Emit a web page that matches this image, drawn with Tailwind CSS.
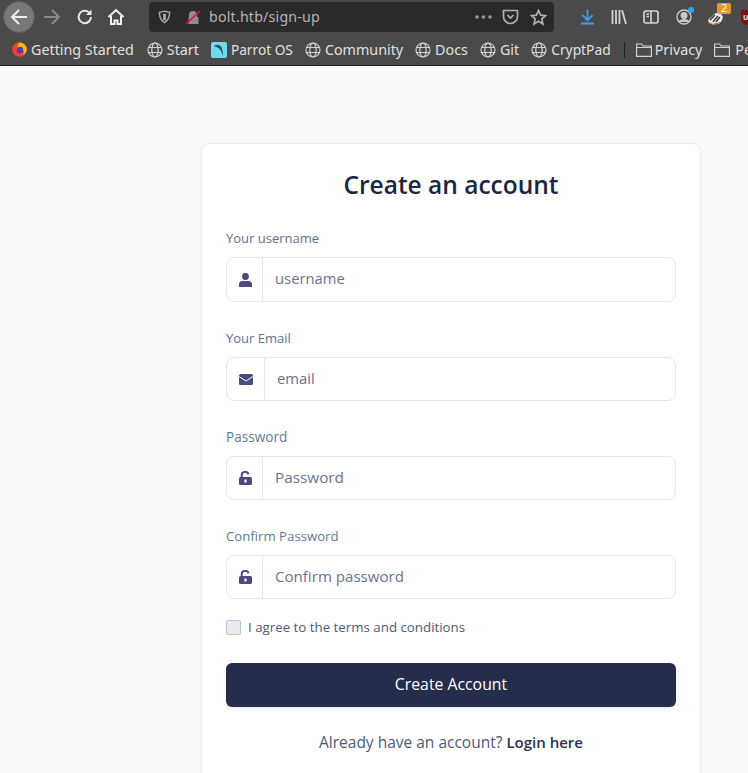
<!doctype html>
<html><head><meta charset="utf-8"><script src="https://cdn.jsdelivr.net/npm/@tailwindcss/browser@4"></script></head>
<body class="h-[773px] w-[748px] overflow-hidden bg-[#fafafa]">
<div class="h-[34px] bg-[#4a4a4a] flex items-center font-['Noto_Sans',sans-serif] text-[#d4d4d4] overflow-hidden">
  <div class="w-8 h-8 ml-[3px] rounded-full bg-[#787878] border border-[#5c5c5c] flex items-center justify-center shrink-0">
    <svg class="w-[18px] h-[18px]" viewBox="0 0 18 18" fill="none" stroke="#eee" stroke-width="2"><path d="M17 9H2M9 2L2 9l7 7"/></svg>
  </div>
  <svg class="w-[18px] h-[18px] ml-[8px] shrink-0" viewBox="0 0 18 18" fill="none" stroke="#8a8a8a" stroke-width="2"><path d="M1 9h15M9 2l7 7-7 7"/></svg>
  <svg class="w-[18px] h-[18px] ml-[15px] shrink-0" viewBox="0 0 18 18" fill="none" stroke="#e8e8e8" stroke-width="2"><path d="M15 9a6.2 6.2 0 1 1-2-4.6L15 6"/><path d="M15.500 1.500V7H10" fill="#e8e8e8" stroke="none"/></svg>
  <svg class="w-[18px] h-[18px] ml-[13px] shrink-0" viewBox="0 0 18 18" fill="none" stroke="#eee" stroke-width="2"><path d="M1.500 9L9 2l7.500 7M4 8v8h3.500v-3.500h3V16H14V8"/></svg>
  <div class="ml-[24px] w-[405px] h-[30px] shrink-0 rounded-[4px] bg-[#2a2a2a] flex items-center">
    <svg class="w-[13px] h-[14px] ml-[9px] shrink-0" viewBox="0 0 14 15" fill="none" stroke="#a8a8a8" stroke-width="1.600"><path d="M1.500 2.500L7 1.200l5.500 1.300c0 5-1 8.800-5.500 11-4.500-2.200-5.500-6-5.500-11z"/><path d="M7 4v7" stroke-width="3"/></svg>
    <svg class="w-[15px] h-[15px] ml-[15px] shrink-0" viewBox="0 0 15 15"><path d="M3 7V5a4 4 0 0 1 8 0v2h1.500v7h-10V7z" fill="#8f8f8f"/><path d="M0 14L14 1" stroke="#e0143c" stroke-width="1.700"/></svg>
    <span class="ml-[8px] text-[14.200px] text-[#b5b5b5] tracking-[0.2px]">bolt.htb/sign-up</span>
    <svg class="w-[17px] h-[4px] ml-[155px] shrink-0" viewBox="0 0 17 4" fill="#9a9a9a"><circle cx="2" cy="2" r="1.800"/><circle cx="8.500" cy="2" r="1.800"/><circle cx="15" cy="2" r="1.800"/></svg>
    <svg class="w-[17px] h-[16px] ml-[10px] shrink-0" viewBox="0 0 17 16" fill="none" stroke="#b0b0b0" stroke-width="1.700"><path d="M1.500 1.500h14v6a7 7 0 0 1-14 0z"/><path d="M5.500 6l3 3 3-3"/></svg>
    <svg class="w-[17px] h-[17px] ml-[11px] shrink-0" viewBox="0 0 17 17" fill="none" stroke="#b0b0b0" stroke-width="1.700"><path d="M8.500 1.500l2.100 4.600 5 .5-3.800 3.300 1.100 5-4.400-2.600-4.400 2.600 1.100-5L1.400 6.600l5-.5z"/></svg>
  </div>
  <svg class="w-[13px] h-[16px] ml-[27px] shrink-0" viewBox="0 0 14 16" fill="none" stroke="#3d9bf2" stroke-width="2"><path d="M7 0v11M1.500 6L7 11.500 12.500 6M0 15h14"/></svg>
  <svg class="w-[16px] h-[14px] ml-[17px] shrink-0" viewBox="0 0 16 14" fill="none" stroke="#d2d2d2" stroke-width="1.800"><path d="M1.500 0v14M5 0v14M8.500 0v14M11 0l4 14"/></svg>
  <svg class="w-[16px] h-[14px] ml-[16px] shrink-0" viewBox="0 0 16 14" fill="none" stroke="#d8d8d8" stroke-width="1.600"><rect x="1" y="1" width="14" height="12" rx="2"/><path d="M8 1v12M3.500 4h2.500M3.500 6.500h2.500"/></svg>
  <div class="relative ml-[17px] w-4 h-4 shrink-0">
    <svg class="w-4 h-4" viewBox="0 0 16 16" fill="none" stroke="#c8c8c8" stroke-width="1.400"><circle cx="8" cy="8" r="7"/><circle cx="8" cy="6.500" r="2.800" fill="#c8c8c8"/><path d="M3.500 13c1-3 8-3 9 0" fill="#c8c8c8"/></svg>
    <span class="absolute -top-[2px] -right-[2px] w-[6px] h-[6px] rounded-full bg-[#2aa5ef]"></span>
  </div>
  <div class="relative ml-[15px] mt-[2px] w-[17px] h-[14px] shrink-0">
    <svg class="w-[17px] h-[14px]" viewBox="0 0 17 14"><path d="M1 9L8 2.500l5-1.500 3 5-2 5-8 2-4-1z" fill="#eee"/><path d="M3 9l5-5M6 11l5-6M9 11l4-5" stroke="#333" stroke-width="1.400"/><path d="M1 11l5 2.500 7-1.500" fill="none" stroke="#d9863a"/></svg>
    <span class="absolute -top-[8px] left-[10px] w-[14px] h-[11px] rounded-[2px] bg-[#e8962e] text-white text-[10px] leading-[11px] text-center">2</span>
  </div>
  <div class="ml-[17px] w-[14px] h-[15px] bg-[#7b1216] rounded-b-[6px] shrink-0 text-[8px] leading-[13px] font-bold text-[#e6d5d5] pl-[2px]">uB</div>
</div>
<div class="h-[32px] bg-[#4a4a4a] border-b border-[#1d1d1d] flex items-center font-['Noto_Sans',sans-serif] text-[14.300px] text-[#e0e0e0] whitespace-nowrap overflow-hidden">
  <svg class="ml-[12px] w-[15px] h-[15px] shrink-0" viewBox="0 0 15 15"><circle cx="7.500" cy="7.500" r="7.300" fill="#ef3f2e"/><path d="M7 .5a7 7 0 0 1 7.800 7.500c-.5 2.500-2 4.500-4.500 5.500 2-2 2-4.500 0-6.500-2-1.500-4-1-5-.5C5.500 4 6 2 7 .5z" fill="#ffb21e"/><circle cx="8" cy="8" r="3.200" fill="#4b3bb8"/></svg>
  <span class="ml-[4px]">Getting Started</span>
  <svg class="w-4 h-4 ml-[13px] shrink-0" viewBox="0 0 16 16" fill="none" stroke="#d2d2d2" stroke-width="1.200"><circle cx="8" cy="8" r="7"/><ellipse cx="8" cy="8" rx="3.200" ry="7"/><path d="M1.500 5.500h13M1.500 10.500h13"/></svg>
  <span class="ml-[4px]">Start</span>
  <div class="ml-[12px] w-4 h-4 rounded-[2px] bg-[#6fd9ee] shrink-0 flex items-center justify-center"><svg class="w-[14px] h-[14px]" viewBox="0 0 14 14"><path d="M2 3c3-2 6-1.500 7.500 1.500 1 2 1.500 5 1.500 8.500-1-3-2-5.500-3.500-7C6 4.500 4 4 2 3z" fill="#2f5563"/></svg></div>
  <span class="ml-[4px] pt-[1px] text-[13.700px]">Parrot OS</span>
  <svg class="w-4 h-4 ml-[12px] shrink-0" viewBox="0 0 16 16" fill="none" stroke="#d2d2d2" stroke-width="1.200"><circle cx="8" cy="8" r="7"/><ellipse cx="8" cy="8" rx="3.200" ry="7"/><path d="M1.500 5.500h13M1.500 10.500h13"/></svg>
  <span class="ml-[4px]">Community</span>
  <svg class="w-4 h-4 ml-[12px] shrink-0" viewBox="0 0 16 16" fill="none" stroke="#d2d2d2" stroke-width="1.200"><circle cx="8" cy="8" r="7"/><ellipse cx="8" cy="8" rx="3.200" ry="7"/><path d="M1.500 5.500h13M1.500 10.500h13"/></svg>
  <span class="ml-[4px]">Docs</span>
  <svg class="w-4 h-4 ml-[12px] shrink-0" viewBox="0 0 16 16" fill="none" stroke="#d2d2d2" stroke-width="1.200"><circle cx="8" cy="8" r="7"/><ellipse cx="8" cy="8" rx="3.200" ry="7"/><path d="M1.500 5.500h13M1.500 10.500h13"/></svg>
  <span class="ml-[4px]">Git</span>
  <svg class="w-4 h-4 ml-[12px] shrink-0" viewBox="0 0 16 16" fill="none" stroke="#d2d2d2" stroke-width="1.200"><circle cx="8" cy="8" r="7"/><ellipse cx="8" cy="8" rx="3.200" ry="7"/><path d="M1.500 5.500h13M1.500 10.500h13"/></svg>
  <span class="ml-[4px] pt-[1px] text-[13.800px]">CryptPad</span>
  <span class="ml-[13px] w-px h-[16px] bg-[#222] shrink-0"></span>
  <svg class="w-4 h-[14px] ml-[11px] shrink-0" viewBox="0 0 16 14" fill="none" stroke="#d2d2d2" stroke-width="1.200"><path d="M.6 13.400V1h5l1.500 2h8.300v10.400zM.6 4.500h14.800"/></svg>
  <span class="ml-[3px]">Privacy</span>
  <svg class="w-4 h-[14px] ml-[12px] shrink-0" viewBox="0 0 16 14" fill="none" stroke="#d2d2d2" stroke-width="1.200"><path d="M.6 13.400V1h5l1.500 2h8.300v10.400zM.6 4.500h14.800"/></svg>
  <span class="ml-[5px]">Personal</span>
</div>
<div class="ml-[201px] mt-[77px] w-[500px] h-[700px] bg-white border border-[#ececec] rounded-[8px] shadow-[0_1px_3px_rgba(0,0,0,0.04)] px-[24px] font-['Open_Sans',sans-serif]">
  <h1 class="mt-[23px] h-[36px] leading-[36px] text-center text-[#1a2744] text-[24.500px] font-semibold">Create an account</h1>
  <label class="block mt-[26px] h-[18px] leading-[18px] text-[13px] text-[#5f6f94]">Your username</label>
  <div class="mt-[10px] h-[45px] flex border border-[#e5e7eb] rounded-[8px]">
    <div class="w-[36px] pl-[1px] border-r border-[#e5e7eb] flex items-center justify-center shrink-0"><svg class="w-[13px] h-[14px]" viewBox="0 0 13 14" fill="#4a4a7c"><circle cx="6.500" cy="3.500" r="3.400"/><path d="M0 14v-2.500C0 9.500 1.500 8 3.500 8h6C11.500 8 13 9.500 13 11.500V14z"/></svg></div>
    <span class="ml-[12px] pb-[2px] self-center text-[14.800px] text-[#6b7196]">username</span>
  </div>
  <label class="block mt-[27px] h-[18px] leading-[18px] text-[13px] text-[#5f6f94]">Your Email</label>
  <div class="mt-[10px] h-[44px] flex border border-[#e5e7eb] rounded-[8px]">
    <div class="w-[38px] pl-[1px] border-r border-[#e5e7eb] flex items-center justify-center shrink-0"><svg class="w-[14px] h-[11px]" viewBox="0 0 14 11"><rect width="14" height="11" rx="1.500" fill="#4a4a7c"/><path d="M0 2.500l7 4.500 7-4.500" fill="none" stroke="#fff" stroke-width="1"/></svg></div>
    <span class="ml-[12px] pb-[2px] self-center text-[14.800px] text-[#6b7196]">email</span>
  </div>
  <label class="block mt-[27px] h-[18px] leading-[18px] text-[13.600px] text-[#5f7a9c]">Password</label>
  <div class="mt-[10px] h-[44px] flex border border-[#e5e7eb] rounded-[8px]">
    <div class="w-[36px] pl-[1px] border-r border-[#e5e7eb] flex items-center justify-center shrink-0"><svg class="w-[13px] h-[14px]" viewBox="0 0 12 14" preserveAspectRatio="none"><path d="M2.500 6V4a3.200 3.200 0 0 1 6.300-.8" fill="none" stroke="#4a4a7c" stroke-width="1.800"/><rect y="6" width="12" height="8" rx="1.500" fill="#4a4a7c"/><rect x="5" y="8.500" width="2" height="3" fill="#fff"/></svg></div>
    <span class="ml-[12px] pb-[2px] self-center text-[15.300px] text-[#6b7196]">Password</span>
  </div>
  <label class="block mt-[27px] h-[18px] leading-[18px] text-[13.200px] text-[#5f7a9c]">Confirm Password</label>
  <div class="mt-[10px] h-[44px] flex border border-[#e5e7eb] rounded-[8px]">
    <div class="w-[36px] pl-[1px] border-r border-[#e5e7eb] flex items-center justify-center shrink-0"><svg class="w-[13px] h-[14px]" viewBox="0 0 12 14" preserveAspectRatio="none"><path d="M2.500 6V4a3.200 3.200 0 0 1 6.300-.8" fill="none" stroke="#4a4a7c" stroke-width="1.800"/><rect y="6" width="12" height="8" rx="1.500" fill="#4a4a7c"/><rect x="5" y="8.500" width="2" height="3" fill="#fff"/></svg></div>
    <span class="ml-[12px] pb-[2px] self-center text-[15.100px] text-[#6b7196]">Confirm password</span>
  </div>
  <div class="mt-[20px] flex items-center h-[17px]">
    <span class="w-[15px] h-[15px] bg-[#e8eaed] border border-[#b9c5d8] rounded-[2px] shrink-0"></span>
    <span class="ml-[7px] text-[13.300px] text-[#4d5a7a]">I agree to the terms and conditions</span>
  </div>
  <div class="mt-[27px] h-[44px] rounded-[6px] bg-[#252d4d] shadow-[0_2px_4px_rgba(0,0,0,0.08)] flex items-center justify-center text-white text-[15.800px] font-medium">Create Account</div>
  <p class="mt-[24px] text-center text-[15.500px] text-[#4d5a7a]">Already have an account? <span class="text-[15px] font-semibold text-[#2c3350]">Login here</span></p>
</div>
</body></html>
